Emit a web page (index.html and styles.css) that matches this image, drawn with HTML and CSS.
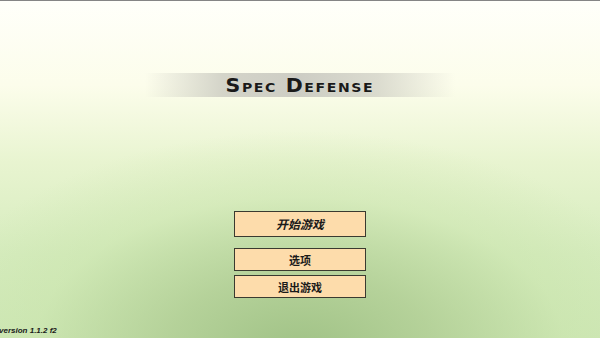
FILE: index.html
```html
<!DOCTYPE html>
<html>
<head>
<meta charset="utf-8">
<link rel="stylesheet" href="styles.css">
</head>
<body>
<div class="screen">
  <div class="banner"><h1 class="title">Spec Defense</h1></div>
  <div class="menu">
    <button class="btn btn-main">开始游戏</button>
    <button class="btn">选项</button>
    <button class="btn">退出游戏</button>
  </div>
  <div class="version">version 1.1.2 f2</div>
</div>
</body>
</html>
```
FILE: styles.css
```css
html, body {
  margin: 0;
  padding: 0;
  width: 600px;
  height: 338px;
  overflow: hidden;
}
.screen {
  position: relative;
  width: 600px;
  height: 338px;
  box-sizing: border-box;
  border-top: 1px solid #858585;
  display: flex;
  flex-direction: column;
  align-items: center;
  background:
    radial-gradient(ellipse 380px 220px at 300px 350px, rgba(160,194,134,1) 0%, rgba(174,204,146,0.8) 35%, rgba(198,226,168,0.4) 70%, rgba(210,236,184,0) 100%),
    linear-gradient(to bottom, #fffffa 0%, #fcfdeb 25%, #e8f4d0 48%, #d6ecbe 75%, #cfe8b6 100%);
  font-family: "Noto Sans CJK SC", "Noto Sans", sans-serif;
}
.banner {
  margin-top: 72px;
  width: 310px;
  height: 24px;
  display: flex;
  justify-content: center;
  align-items: center;
  background: linear-gradient(to right, rgba(200,200,190,0) 0%, rgba(205,205,195,0.85) 25%, rgba(200,200,192,0.9) 50%, rgba(205,205,195,0.7) 75%, rgba(210,210,195,0) 100%);
}
.title {
  margin: 0;
  font-family: "DejaVu Sans", sans-serif;
  font-weight: bold;
  font-size: 19px;
  font-variant: small-caps;
  letter-spacing: 1.5px;
  color: #1a1a1a;
  line-height: 24px;
  transform: scaleX(1.08);
}
.menu {
  margin-top: 114px;
  display: flex;
  flex-direction: column;
  align-items: center;
}
.btn {
  width: 132px;
  height: 23px;
  margin: 0;
  padding: 0;
  border: 1px solid #3a3a30;
  background: #fddcab;
  color: #1a1a1a;
  font-family: "Noto Sans CJK SC", "Noto Sans", sans-serif;
  font-weight: bold;
  font-size: 11px;
  line-height: 20px;
  margin-bottom: 4px;
}
.btn-main {
  height: 26px;
  font-size: 12px;
  font-style: italic;
  margin-bottom: 11px;
}
.version {
  position: absolute;
  left: -1px;
  bottom: 3px;
  font-family: "Liberation Sans", sans-serif;
  font-weight: bold;
  font-style: italic;
  font-size: 8px;
  color: #1a1a1a;
}
```
